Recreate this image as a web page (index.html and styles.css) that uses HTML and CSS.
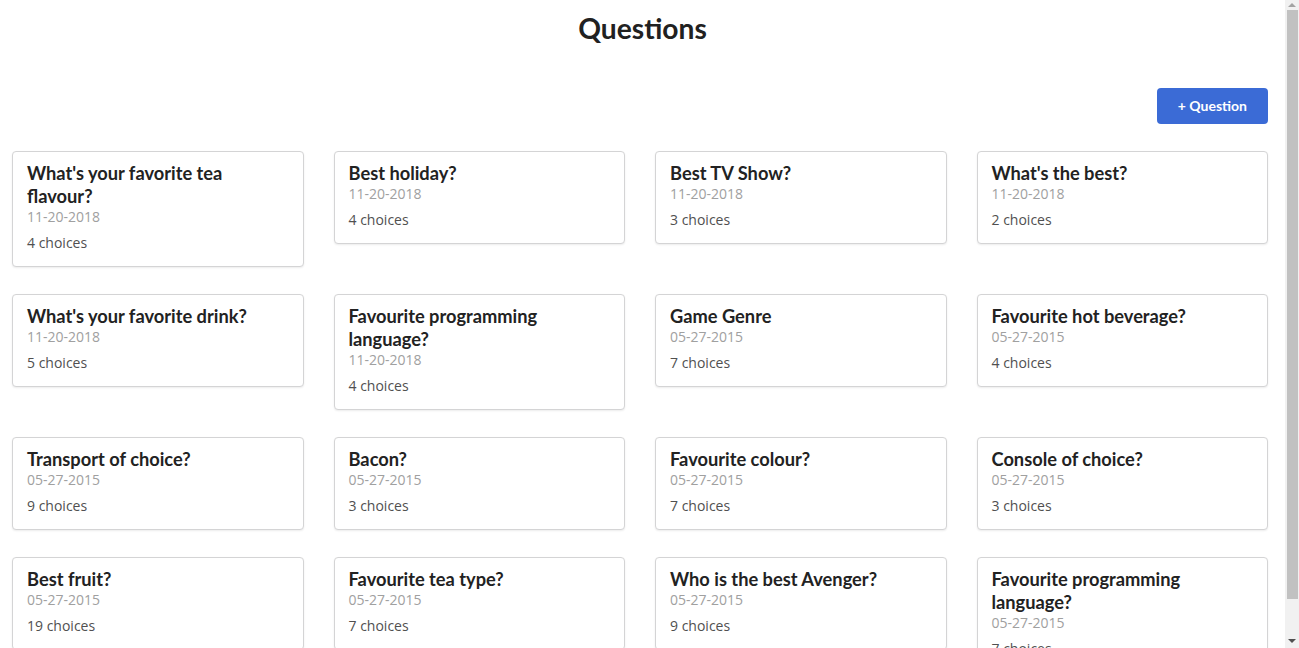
FILE: index.html
```html
<!DOCTYPE html>
<html>
<head>
<meta charset="utf-8">
<title>Questions</title>
<link rel="stylesheet" href="styles.css">
</head>
<body>
<div class="main">
  <h1 class="title">Questions</h1>
  <div class="content">
    <div class="toolbar"><button class="btn">+ Question</button></div>
    <div class="grid">
      <div class="card"><div class="header">What's your favorite tea flavour?</div><div class="meta">11-20-2018</div><div class="desc">4 choices</div></div>
      <div class="card"><div class="header">Best holiday?</div><div class="meta">11-20-2018</div><div class="desc">4 choices</div></div>
      <div class="card"><div class="header">Best TV Show?</div><div class="meta">11-20-2018</div><div class="desc">3 choices</div></div>
      <div class="card"><div class="header">What's the best?</div><div class="meta">11-20-2018</div><div class="desc">2 choices</div></div>

      <div class="card"><div class="header">What's your favorite drink?</div><div class="meta">11-20-2018</div><div class="desc">5 choices</div></div>
      <div class="card"><div class="header">Favourite programming language?</div><div class="meta">11-20-2018</div><div class="desc">4 choices</div></div>
      <div class="card"><div class="header">Game Genre</div><div class="meta">05-27-2015</div><div class="desc">7 choices</div></div>
      <div class="card"><div class="header">Favourite hot beverage?</div><div class="meta">05-27-2015</div><div class="desc">4 choices</div></div>

      <div class="card"><div class="header">Transport of choice?</div><div class="meta">05-27-2015</div><div class="desc">9 choices</div></div>
      <div class="card"><div class="header">Bacon?</div><div class="meta">05-27-2015</div><div class="desc">3 choices</div></div>
      <div class="card"><div class="header">Favourite colour?</div><div class="meta">05-27-2015</div><div class="desc">7 choices</div></div>
      <div class="card"><div class="header">Console of choice?</div><div class="meta">05-27-2015</div><div class="desc">3 choices</div></div>

      <div class="card"><div class="header">Best fruit?</div><div class="meta">05-27-2015</div><div class="desc">19 choices</div></div>
      <div class="card"><div class="header">Favourite tea type?</div><div class="meta">05-27-2015</div><div class="desc">7 choices</div></div>
      <div class="card"><div class="header">Who is the best Avenger?</div><div class="meta">05-27-2015</div><div class="desc">9 choices</div></div>
      <div class="card"><div class="header">Favourite programming language?</div><div class="meta">05-27-2015</div><div class="desc">7 choices</div></div>
    </div>
  </div>
</div>
<div class="scrollbar" aria-hidden="true">
  <div class="sb-btn sb-up"><span class="tri-up"></span></div>
  <div class="sb-thumb"></div>
  <div class="sb-space"></div>
  <div class="sb-btn sb-down"><span class="tri-down"></span></div>
</div>
</body>
</html>
```
FILE: styles.css
```css
html, body {
  margin: 0;
  padding: 0;
  background: #ffffff;
}
body {
  font-family: "Open Sans", "Liberation Sans", sans-serif;
  font-size: 14px;
  color: rgba(0, 0, 0, 0.87);
}
.main {
  margin-right: 14px;
  padding-bottom: 14px;
}
.title {
  margin: 10px 0 0;
  font-family: Lato, "Liberation Sans", sans-serif;
  font-weight: 700;
  font-size: 28.2px;
  line-height: 36px;
  text-align: center;
  color: #212121;
}
.content {
  padding: 0 17px 0 12px;
}
.toolbar {
  display: flex;
  justify-content: flex-end;
  margin-top: 42px;
}
.btn {
  font-family: Lato, "Liberation Sans", sans-serif;
  font-weight: 700;
  font-size: 14px;
  line-height: 14px;
  padding: 11px 21px;
  color: #ffffff;
  background: #3b6bd6;
  border: none;
  border-radius: 4px;
  cursor: pointer;
}
.grid {
  display: grid;
  grid-template-columns: repeat(4, 1fr);
  column-gap: 30px;
  row-gap: 27px;
  align-items: start;
  margin-top: 27px;
}
.card {
  border: 1px solid #d4d4d5;
  border-radius: 4px;
  box-shadow: 0 1px 2px rgba(0, 0, 0, 0.08);
  padding: 14px 14px 13px;
  background: #fff;
}
.header {
  font-family: Lato, "Liberation Sans", sans-serif;
  font-weight: 700;
  font-size: 18.25px;
  line-height: 23px;
  margin-top: -4px;
  color: #222222;
}
.meta {
  font-size: 14px;
  line-height: 18px;
  color: #a0a0a0;
}
.desc {
  margin-top: 7px;
  font-size: 14px;
  line-height: 20px;
  color: #505050;
}

/* drawn scrollbar, overlaying the right edge of the window */
.scrollbar {
  position: fixed;
  top: 0;
  right: 0;
  width: 14px;
  height: 100%;
  background: #f1f1f1;
  display: flex;
  flex-direction: column;
}
.sb-btn {
  display: flex;
  align-items: center;
  justify-content: center;
}
.sb-up {
  height: 10px;
}
.sb-down {
  height: 14px;
}
.tri-up {
  width: 0;
  height: 0;
  border-left: 4px solid transparent;
  border-right: 4px solid transparent;
  border-bottom: 4px solid #a3a3a3;
}
.tri-down {
  width: 0;
  height: 0;
  border-left: 4px solid transparent;
  border-right: 4px solid transparent;
  border-top: 4px solid #505050;
}
.sb-thumb {
  height: 589px;
  margin: 0 1px 0 2px;
  background: #c1c1c1;
}
.sb-space {
  flex: 1;
}
```
